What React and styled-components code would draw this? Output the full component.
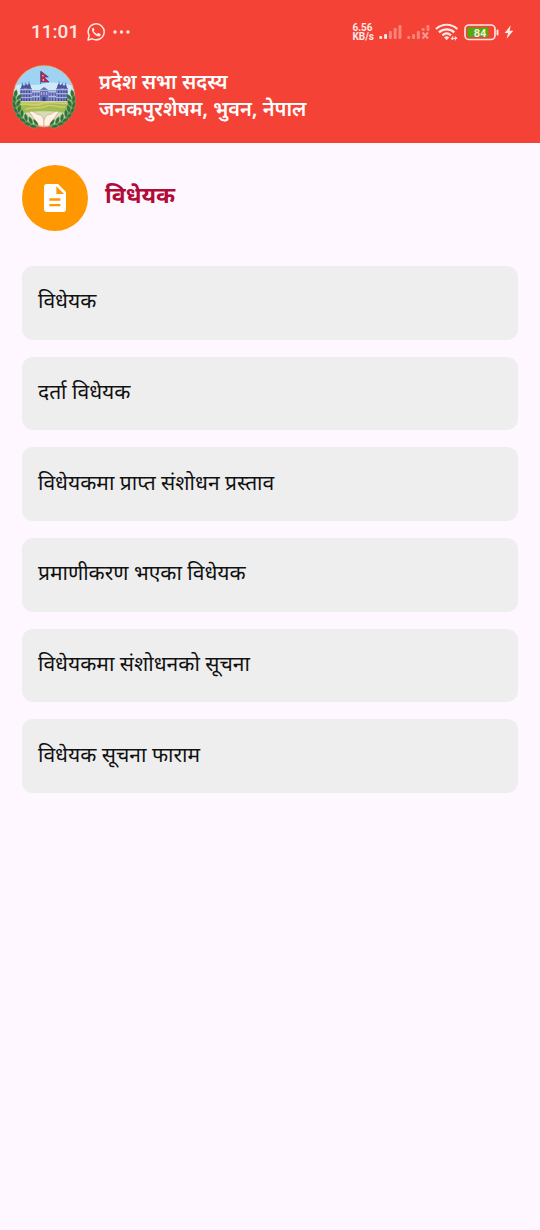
import React from 'react';
import styled, { createGlobalStyle } from 'styled-components';

const GlobalStyle = createGlobalStyle`
  * { box-sizing: border-box; }
  body {
    margin: 0;
    background: #fef7ff;
    font-family: "Noto Sans Devanagari", "Noto Sans", sans-serif;
  }
`;

const Page = styled.div`
  min-height: 100vh;
  background: #fef7ff;
`;

const TopBar = styled.header`
  background: #f44336;
  color: #fff;
  padding-bottom: 12px;
`;

const StatusBar = styled.div`
  display: flex;
  align-items: center;
  justify-content: space-between;
  height: 64px;
  padding: 0 26px 0 31px;
  font-family: Roboto, sans-serif;
  color: #ffe8e5;
`;

const StatusGroup = styled.div`
  display: flex;
  align-items: center;
  gap: ${(p) => p.$gap}px;
`;

const Clock = styled.time`
  font-size: 19px;
  line-height: 24px;
  font-weight: 500;
`;

const Speed = styled.span`
  display: flex;
  flex-direction: column;
  font-size: 10px;
  line-height: 9px;
  font-weight: 700;
  white-space: nowrap;
`;

const Account = styled.div`
  display: flex;
  align-items: center;
  gap: 22px;
  padding: 1px 11px 0;
`;

const AccountText = styled.p`
  margin: 0;
  font-size: 20px;
  line-height: 27px;
  font-weight: 600;
`;

const Content = styled.main`
  padding: 22px;
`;

const Heading = styled.div`
  display: flex;
  align-items: center;
  gap: 17px;
  margin-bottom: 35px;
`;

const Badge = styled.span`
  display: grid;
  place-items: center;
  width: 66px;
  height: 66px;
  border-radius: 50%;
  background: #ff9800;
`;

const Title = styled.h1`
  margin: 0;
  padding-bottom: 3px;
  font-size: 23px;
  line-height: 30px;
  font-weight: 700;
  color: #b00c38;
`;

const Menu = styled.nav`
  display: grid;
  grid-auto-rows: 1fr;
  gap: 17px;
  min-height: 527px;
`;

const MenuItem = styled.button`
  display: flex;
  align-items: center;
  width: 100%;
  padding: 18px 16px 16px;
  border: 0;
  border-radius: 11px;
  background: #eee;
  color: #111;
  font-family: inherit;
  font-size: 21px;
  line-height: 27px;
  text-align: left;
  cursor: pointer;
`;

const items = [
  'विधेयक',
  'दर्ता विधेयक',
  'विधेयकमा प्राप्त संशोधन प्रस्ताव',
  'प्रमाणीकरण भएका विधेयक',
  'विधेयकमा संशोधनको सूचना',
  'विधेयक सूचना फाराम',
];

function WhatsAppIcon() {
  return (
    <svg width="18" height="18" viewBox="0 0 54 54" fill="none" aria-hidden="true">
      <path d="M3 51l3.500-13A24 24 0 1 1 16 47.500z" stroke="currentColor" strokeWidth="4.500" strokeLinejoin="round" />
      <path
        d="M19 14c-3 1-5 4-4 8 2 9 9 16 18 18 4 1 7-1 8-5 0-2-1-2-7-5-1 0-2 0-4 3-4-1-8-5-10-9 2-2 2-3 2-4l-2-5c-.4-1-.8-1-1-1z"
        fill="currentColor"
      />
    </svg>
  );
}

function DotsIcon() {
  return (
    <svg width="17" height="4" viewBox="0 0 17 4" fill="currentColor" aria-hidden="true">
      <circle cx="2" cy="2" r="1.700" />
      <circle cx="8.500" cy="2" r="1.700" />
      <circle cx="15" cy="2" r="1.700" />
    </svg>
  );
}

const barTops = [12, 10, 7, 4, 1];

function SignalIcon({ level, disabled }) {
  return (
    <svg width="23" height="16" viewBox="0 0 23 16" fill="currentColor" aria-hidden="true">
      {barTops.map((top, i) => {
        const cut = disabled && i > 2;
        return (
          <rect
            key={top}
            x={i * 4.800 + 0.300}
            y={top}
            width="2.900"
            height={cut ? 7 - top : 15 - top}
            rx="1"
            opacity={i < level ? 1 : 0.4}
          />
        );
      })}
      {disabled && <path d="M15.500 8.500l5.500 6M21 8.500l-5.500 6" stroke="currentColor" strokeWidth="2" opacity="0.5" />}
    </svg>
  );
}

function WifiIcon() {
  return (
    <svg width="24" height="18" viewBox="0 0 72 54" fill="none" stroke="currentColor" aria-hidden="true">
      <path d="M3 18C21 1 49 1 67 18M12 28c13-12 33-12 46 0M22 37c8-7 18-7 26 0" strokeWidth="6.500" />
      <path d="M27 43c5-4 11-4 16 0l-8 9z" fill="currentColor" stroke="none" />
      <path d="M53 40v11l-5-5h18l-5-5v11" strokeWidth="3" />
    </svg>
  );
}

function BatteryIcon() {
  return (
    <svg width="35" height="17" viewBox="0 0 35 17" role="img" aria-label="84%">
      <rect x="1" y="1" width="30" height="14.500" rx="4" fill="none" stroke="currentColor" strokeWidth="1.600" />
      <rect x="3.500" y="3.500" width="21" height="9.500" rx="1.500" fill="#4cae0c" />
      <path d="M33.500 6.500v4" stroke="currentColor" strokeWidth="2" strokeLinecap="round" />
      <text x="16" y="12.500" textAnchor="middle" fontSize="11" fontWeight="700" fontFamily="Roboto, sans-serif" fill="currentColor">
        84
      </text>
    </svg>
  );
}

function BoltIcon() {
  return (
    <svg width="10" height="14" viewBox="0 0 30 42" fill="currentColor" aria-hidden="true">
      <path d="M20 1L2 24h10L8 41l20-24H17z" />
    </svg>
  );
}

const leaves = [
  [47, 110, 10], [43, 127, -8], [43, 145, -20], [48, 162, -32], [57, 177, -45], [69, 190, -58], [83, 201, -70], [100, 208, -80],
];
const innerLeaves = [
  [57, 121, 42], [55, 139, 28], [58, 156, 14], [66, 170, 2], [78, 182, -12], [92, 191, -25], [108, 197, -38],
];

function Wreath() {
  return (
    <g fill="#2c7340" stroke="#9bb878" strokeWidth="1">
      <path d="M48 116C43 158 68 197 118 209" fill="none" stroke="#52733b" strokeWidth="2" />
      {[...leaves, ...innerLeaves].map(([x, y, turn]) => (
        <path key={`${x}-${y}`} d="M0-13C7-5 7 5 0 12C-7 5-7-5 0-13z" transform={`translate(${x} ${y}) rotate(${turn})`} />
      ))}
    </g>
  );
}

function Tower() {
  return (
    <g>
      <path d="M60 94h36v40H60z" fill="#7880c0" />
      <path d="M62 95l3-10 3-4 3 4 2 10zM80 95l3-11 4-5 4 5 3 11zM68 94l6-10 4-4 4 4 4 10z" fill="#4b559d" />
      <path d="M67 82v-5M87 80v-6M76 81v-4" stroke="#4b559d" strokeWidth="2" />
      <path d="M59 98h38M59 110h38M59 121h38" stroke="#d5d9f4" strokeWidth="2" />
      <path d="M65 101v7m7-7v7m8-7v7m8-7v7M65 113v7m7-7v7m8-7v7m8-7v7M65 124v8m7-8v8m8-8v8m8-8v8" stroke="#343e85" strokeWidth="3" />
    </g>
  );
}

function Emblem() {
  return (
    <svg width="66" height="66" viewBox="33 24 198 198" role="img" aria-label="प्रदेश सभा">
      <defs>
        <clipPath id="emblem-disc">
          <circle cx="132" cy="118" r="90" />
        </clipPath>
      </defs>
      <circle cx="132" cy="118" r="93" fill="#d8b98f" />
      <circle cx="132" cy="118" r="90" fill="#9fd3f3" />
      <g clipPath="url(#emblem-disc)">
        <path d="M36 88c30-12 60 2 94-8s72 2 100 8v50H36z" fill="#cfe9f7" />
        <path d="M36 128h194v96H36z" fill="#b5c65b" />
        <path d="M36 150c40-20 60 6 95-5s60-14 99 4v20H36z" fill="#9fbd55" />
        <path d="M60 143c24-7 42 8 67-4 20-8 44 4 77 0M76 157c28-10 44 0 61-9s36 5 58 2" fill="none" stroke="#dccc66" strokeWidth="4" />
        <path d="M42 176c40-18 136-18 184 0v55H42z" fill="#d5ddb4" />
        <path d="M91 100h82v34H91z" fill="#8991cb" />
        <path d="M91 104h82M91 118h82" stroke="#dfe2f7" strokeWidth="2" />
        <path d="M99 108v8m8-8v8m8-8v8m35-8v8m8-8v8m8-8v8M99 122v10m8-10v10m8-10v10m35-10v10m8-10v10m8-10v10" stroke="#414b92" strokeWidth="3" />
        <path d="M120 99l12-9 13 9v35h-25z" fill="#656eb4" />
        <path d="M119 100h27M124 105v9m8-9v9m8-9v9" stroke="#e5e8fa" strokeWidth="2" />
        <path d="M127 134v-11q5-6 10 0v11" fill="#353f87" />
        <Tower />
        <g transform="translate(264 0) scale(-1 1)">
          <Tower />
        </g>
        <path d="M58 134h149" stroke="#dfdfc0" strokeWidth="3" />
      </g>
      <Wreath />
      <g transform="translate(264 0) scale(-1 1)">
        <Wreath />
      </g>
      <g fill="#fff3e5" stroke="#c98771" strokeWidth="1.500">
        <path d="M87 164c9-3 18 1 24 8 8-1 14 3 18 10 4 7 4 16 2 26l-16-2c0-9-5-12-11-19-8-8-10-16-17-23z" />
        <path d="M177 164c-9-3-18 1-24 8-8-1-14 3-18 10-4 7-4 16-2 26l16-2c0-9 5-12 11-19 8-8 10-16 17-23z" />
      </g>
      <path d="M122 43v38" stroke="#344078" strokeWidth="2" />
      <path d="M123 43l22 17h-13l15 15h-24z" fill="#d51f3f" stroke="#29458b" strokeWidth="2" />
      <circle cx="129" cy="56" r="2" fill="#fff" />
      <circle cx="130" cy="69" r="2.500" fill="#fff" />
    </svg>
  );
}

function DocumentIcon() {
  return (
    <svg width="22" height="28" viewBox="0 0 66 84" aria-hidden="true">
      <path d="M8 0h34l24 24v52q0 8-8 8H8q-8 0-8-8V8q0-8 8-8z" fill="#fff" />
      <path d="M37 7v23h23zM16 43h33v7H16zM16 60h33v7H16z" fill="#ff9800" />
    </svg>
  );
}

export default function App() {
  return (
    <Page>
      <GlobalStyle />
      <TopBar>
        <StatusBar>
          <StatusGroup $gap={8}>
            <Clock>11:01</Clock>
            <WhatsAppIcon />
            <DotsIcon />
          </StatusGroup>
          <StatusGroup $gap={5}>
            <Speed>
              <span>6.56</span>
              <span>KB/s</span>
            </Speed>
            <SignalIcon level={2} />
            <SignalIcon level={0} disabled />
            <WifiIcon />
            <BatteryIcon />
            <BoltIcon />
          </StatusGroup>
        </StatusBar>
        <Account>
          <Emblem />
          <div>
            <AccountText>प्रदेश सभा सदस्य</AccountText>
            <AccountText>जनकपुरशेषम, भुवन, नेपाल</AccountText>
          </div>
        </Account>
      </TopBar>
      <Content>
        <Heading>
          <Badge>
            <DocumentIcon />
          </Badge>
          <Title>विधेयक</Title>
        </Heading>
        <Menu>
          {items.map((label) => (
            <MenuItem key={label} type="button">
              {label}
            </MenuItem>
          ))}
        </Menu>
      </Content>
    </Page>
  );
}
